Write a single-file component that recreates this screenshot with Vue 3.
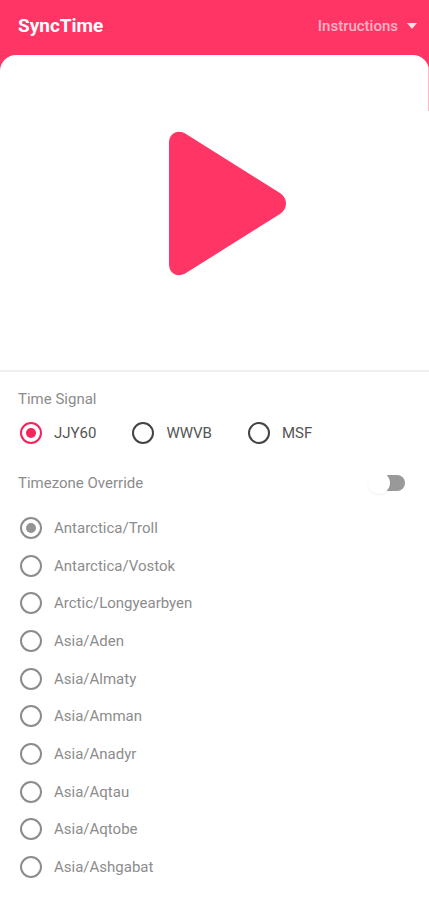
<script setup>
import { ref } from 'vue'

const signals = ['JJY60', 'WWVB', 'MSF']
const zones = [
  'Antarctica/Troll',
  'Antarctica/Vostok',
  'Arctic/Longyearbyen',
  'Asia/Aden',
  'Asia/Almaty',
  'Asia/Amman',
  'Asia/Anadyr',
  'Asia/Aqtau',
  'Asia/Aqtobe',
  'Asia/Ashgabat',
]

const signal = ref('JJY60')
const zone = ref('Antarctica/Troll')
const override = ref(false)
</script>

<template>
  <div class="app">
    <header class="bar">
      <h1 class="title">SyncTime</h1>
      <button class="instructions" type="button">
        <span>Instructions</span>
        <svg class="caret" viewBox="0 0 10 6" aria-hidden="true">
          <path d="M0 0H10L5 6Z" />
        </svg>
      </button>
    </header>

    <main class="sheet">
      <section class="hero">
        <button class="play" type="button" aria-label="Play">
          <svg viewBox="0 0 119 146" aria-hidden="true">
            <path d="M1 12C1 2 10 -2 18 3L112 62C120 67 120 78 112 83L18 142C10 147 1 143 1 133Z" />
          </svg>
        </button>
      </section>

      <section class="settings">
        <h2 id="signal-title" class="heading">Time Signal</h2>
        <div class="signals" role="radiogroup" aria-labelledby="signal-title">
          <label v-for="s in signals" :key="s" class="option">
            <input v-model="signal" class="radio" type="radio" name="signal" :value="s" />
            <span>{{ s }}</span>
          </label>
        </div>

        <label class="override">
          <span class="heading">Timezone Override</span>
          <input v-model="override" class="switch" type="checkbox" role="switch" />
        </label>

        <div class="zones" role="radiogroup" aria-label="Timezone">
          <label v-for="z in zones" :key="z" class="option muted">
            <input v-model="zone" class="radio" type="radio" name="zone" :value="z" />
            <span>{{ z }}</span>
          </label>
        </div>
      </section>
    </main>
  </div>
</template>

<style>
body {
  background: #ff3665;
}
</style>

<style scoped>
.app {
  display: flex;
  flex-direction: column;
  min-height: 100vh;
  font-family: Roboto, "Liberation Sans", sans-serif;
  font-size: 15px;
  line-height: 20px;
  color: #555;
}

.bar {
  display: flex;
  align-items: center;
  justify-content: space-between;
  box-sizing: border-box;
  height: 55px;
  padding: 0 12px 3px 18px;
}

.title {
  margin: 0;
  font-size: 19px;
  font-weight: 700;
  color: #fff;
}

.instructions {
  display: flex;
  align-items: center;
  gap: 9px;
  padding: 0;
  border: 0;
  background: none;
  font: inherit;
  font-weight: 500;
  color: #ffb3c5;
  cursor: pointer;
}

.caret {
  width: 10px;
  height: 6px;
  fill: #ffdbe4;
}

.sheet {
  position: relative;
  display: flex;
  flex: 1;
  flex-direction: column;
  border-radius: 16px 16px 0 0;
  background: #fff;
}

/* Edge of the page behind the sheet */
.sheet::after {
  content: "";
  position: absolute;
  top: 12px;
  right: 0;
  width: 1px;
  height: 44px;
  background: #ffb8c8;
}

.hero {
  display: flex;
  align-items: center;
  justify-content: center;
  box-sizing: border-box;
  height: 317px;
  padding: 0 0 18px 26px;
  border-bottom: 2px solid #f0f0f0;
}

.play {
  display: block;
  padding: 0;
  border: 0;
  background: none;
  cursor: pointer;
}

.play svg {
  display: block;
  width: 119px;
  height: 146px;
  fill: #ff3665;
}

.settings {
  display: flex;
  flex: 1;
  flex-direction: column;
  padding: 17px 24px 14px 18px;
}

.heading {
  margin: 0;
  font-size: 15px;
  font-weight: 400;
  color: #8c8c8c;
}

.signals {
  display: flex;
  gap: 36px;
  padding: 13px 2px 0;
}

.option {
  display: flex;
  align-items: center;
  gap: 12px;
  cursor: pointer;
}

.radio {
  display: grid;
  place-items: center;
  appearance: none;
  box-sizing: border-box;
  flex: none;
  width: 22px;
  height: 22px;
  margin: 0;
  border: 2px solid #444;
  border-radius: 50%;
}

.radio:checked {
  border-color: #f5245a;
}

.radio:checked::before {
  content: "";
  width: 10px;
  height: 10px;
  border-radius: 50%;
  background: #f5245a;
}

.override {
  display: flex;
  align-items: center;
  justify-content: space-between;
  padding: 29px 0 16px;
  cursor: pointer;
}

.switch {
  display: flex;
  align-items: center;
  appearance: none;
  width: 32px;
  height: 16px;
  margin: 0;
  border-radius: 8px;
  background: #999;
}

.switch::before {
  content: "";
  width: 22px;
  height: 22px;
  margin-left: -5px;
  flex: none;
  border-radius: 50%;
  background: #fff;
  box-shadow: 0 1px 2px rgba(0, 0, 0, 0.06);
}

.switch:checked {
  justify-content: flex-end;
  background: #ff9bb2;
}

.switch:checked::before {
  background: #ff3665;
}

.zones {
  display: flex;
  flex: 1;
  flex-direction: column;
  padding: 0 2px;
}

.zones .option {
  flex: 1 0 auto;
}

.muted {
  color: #8c8c8c;
}

.muted .radio {
  border-color: #8c8c8c;
}

.muted .radio:checked::before {
  background: #949494;
}
</style>
